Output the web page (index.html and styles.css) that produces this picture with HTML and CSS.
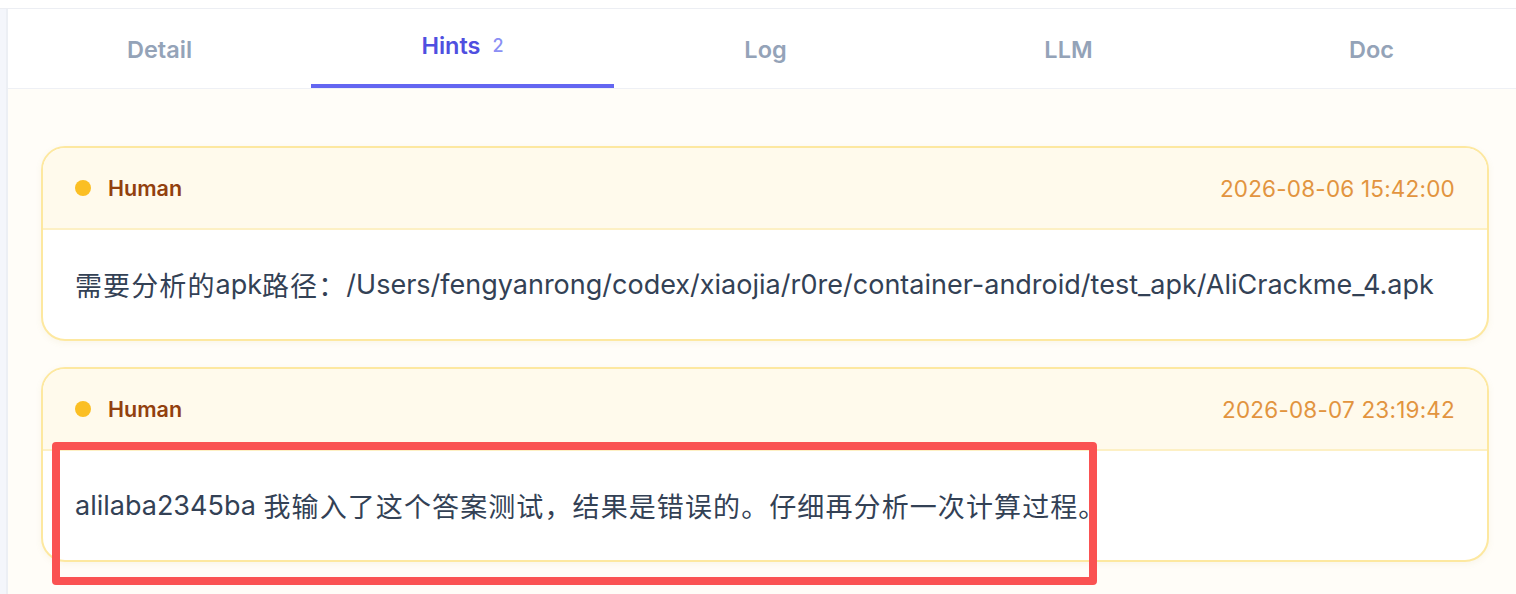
FILE: index.html
```html
<!DOCTYPE html>
<html lang="zh-CN">
<head>
<meta charset="utf-8">
<title>Hints</title>
<link rel="stylesheet" href="styles.css">
</head>
<body>
<div class="page">
  <div class="side-strip"></div>
  <section class="panel">
    <nav class="tabs">
      <div class="tab"><span class="tab-label">Detail</span></div>
      <div class="tab tab-active"><span class="tab-label">Hints</span><span class="tab-count">2</span></div>
      <div class="tab"><span class="tab-label">Log</span></div>
      <div class="tab"><span class="tab-label">LLM</span></div>
      <div class="tab"><span class="tab-label">Doc</span></div>
    </nav>
    <div class="hints">
      <article class="hint">
        <header class="hint-head">
          <div class="who"><span class="dot"></span><span class="author">Human</span></div>
          <time class="stamp">2026-08-06 15:42:00</time>
        </header>
        <div class="hint-body"><span class="cjk">需要分析的</span>apk<span class="cjk">路径：</span>/Users/fengyanrong/codex/xiaojia/r0re/container-android/test_apk/AliCrackme_4.apk</div>
      </article>
      <article class="hint">
        <header class="hint-head">
          <div class="who"><span class="dot"></span><span class="author">Human</span></div>
          <time class="stamp">2026-08-07 23:19:42</time>
        </header>
        <div class="hint-body">alilaba2345ba <span class="cjk">我输入了这个答案测试，结果是错误的。仔细再分析一次计算过程。</span></div>
      </article>
    </div>
  </section>
  <div class="annotation"></div>
</div>
</body>
</html>
```
FILE: styles.css
```css
html, body {
  margin: 0;
  padding: 0;
  background: #ffffff;
  overflow: hidden;
  width: 1516px;
  height: 594px;
}
body {
  font-family: Inter, "Noto Sans CJK SC", sans-serif;
}
.page {
  position: relative;
  display: flex;
  margin-top: 8px;
  border-top: 1.5px solid #eceef3;
  height: 600px;
}
.side-strip {
  flex: 0 0 6px;
  background: #f4f6fb;
}
.panel {
  flex: 0 0 1515px;
  border-left: 2px solid #eceff4;
  background: #fffdf8;
  display: flex;
  flex-direction: column;
}
.tabs {
  display: grid;
  grid-template-columns: repeat(5, 1fr);
  height: 79px;
  background: #ffffff;
  border-bottom: 1px solid #eef0f5;
}
.tab {
  display: flex;
  align-items: center;
  justify-content: center;
  gap: 12px;
  font-size: 23.5px;
  font-weight: 600;
  color: #94a3b8;
  box-sizing: border-box;
  padding-top: 2px;
}
.tab-active {
  color: #4f4fe0;
  border-bottom: 4px solid #6366f1;
  padding-top: 0;
  padding-bottom: 3px;
}
.tab-count {
  font-size: 18px;
  font-weight: 500;
  color: #8b8ff4;
}
.hints {
  padding: 57px 34px 0 33px;
  display: flex;
  flex-direction: column;
  gap: 26px;
}
.hint {
  width: 1448px;
  box-sizing: border-box;
  border: 2px solid #fde8a0;
  border-radius: 24px;
  background: #ffffff;
  overflow: hidden;
  box-shadow: 0 2px 6px rgba(180, 150, 60, 0.08);
}
.hint-head {
  height: 80px;
  display: flex;
  align-items: center;
  justify-content: space-between;
  padding: 0 32px;
  background: #fffaec;
  border-bottom: 2px solid #fdf0c4;
}
.who {
  display: flex;
  align-items: center;
  gap: 17px;
}
.dot {
  width: 16px;
  height: 16px;
  border-radius: 50%;
  background: #fbbf24;
}
.author {
  font-size: 21.5px;
  font-weight: 600;
  color: #92400e;
}
.stamp {
  font-size: 22.5px;
  color: #e2943f;
  letter-spacing: 0.2px;
}
.hint-body {
  height: 109px;
  display: flex;
  align-items: center;
  padding: 0 32px;
  font-size: 27px;
  color: #334155;
  white-space: pre;
}
.cjk {
  letter-spacing: 1.1px;
}
.annotation {
  position: absolute;
  left: 52px;
  top: 433px;
  width: 1045px;
  height: 143px;
  box-sizing: border-box;
  border: 8px solid #fa5252;
  border-radius: 4px;
}
```
